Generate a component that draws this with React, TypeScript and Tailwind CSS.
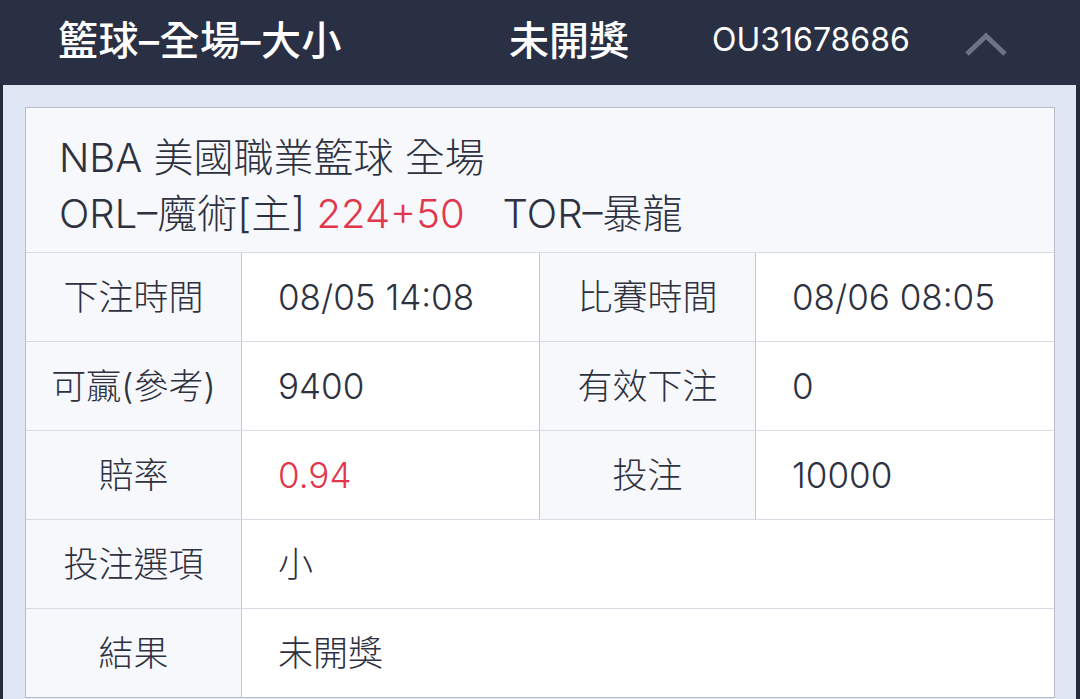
import React from 'react'

const font = { fontFamily: 'Inter, "Noto Sans CJK TC", sans-serif' }

interface Cell {
  label: string;
  value: string;
  red?: boolean;
}

const rows: Cell[][] = [
  [
    { label: '下注時間', value: '08/05 14:08' },
    { label: '比賽時間', value: '08/06 08:05' },
  ],
  [
    { label: '可贏(參考)', value: '9400' },
    { label: '有效下注', value: '0' },
  ],
  [
    { label: '賠率', value: '0.94', red: true },
    { label: '投注', value: '10000' },
  ],
  [{ label: '投注選項', value: '小' }],
  [{ label: '結果', value: '未開獎' }],
];

const Header: React.FC = () => (
  <div className="flex items-center h-[85px] bg-[#2a3043] text-white pl-[58px]">
    <div className="w-[451px] text-[40px] font-medium tracking-[0.5px] -mt-[4px]">籃球–全場–大小</div>
    <div className="w-[203px] text-[40px] font-medium -mt-[4px]">未開獎</div>
    <div className="w-[252px] text-[32px] -mt-[5px]">OU31678686</div>
    <svg width="44" height="28" viewBox="0 0 44 28" className="mt-[2px]">
      <path d="M3 24 L22 6 L41 24" fill="none" stroke="#6c7384" strokeWidth="5" />
    </svg>
  </div>
);

const App: React.FC = () => {
  return (
    <div className="w-[1080px] h-[699px] overflow-hidden bg-[#262b3b] text-[#2d3140]" style={font}>
      <Header />
      <div className="ml-[3px] mr-[4px] h-[614px] bg-[#e0e7f4] pt-[22px] pl-[22px] pr-[21px]">
        <div className="border border-[#b9bdca] bg-[#f7f8fb]">
          {/* match info */}
          <div className="pt-[22px] pb-[10px] pl-[33px] text-[40px] leading-[56px] font-light">
            <div>NBA 美國職業籃球 全場</div>
            <div>
              ORL–魔術[主] <span className="text-[#e0374d]">224+50</span>
              <span className="ml-[38px]">TOR–暴龍</span>
            </div>
          </div>

          {rows.map((row, i) => (
            <div key={i} className="flex h-[89px] border-t border-[#d8dbe3] text-[35px] font-light">
              {row.map((cell, j) => (
                <React.Fragment key={cell.label}>
                  <div
                    className={`flex items-center justify-center bg-[#f7f8fb] ${
                      j === 0 ? 'w-[215px]' : 'w-[216px] border-l border-[#c4c7d0]'
                    }`}
                  >
                    {cell.label}
                  </div>
                  <div
                    className={`flex items-center bg-white pl-[36px] border-l border-[#c4c7d0] ${
                      row.length === 2 && j === 0 ? 'w-[298px]' : 'flex-1'
                    } ${cell.red ? 'text-[#e0374d]' : ''}`}
                  >
                    {cell.value}
                  </div>
                </React.Fragment>
              ))}
            </div>
          ))}
        </div>
      </div>
    </div>
  );
};

export default App;
